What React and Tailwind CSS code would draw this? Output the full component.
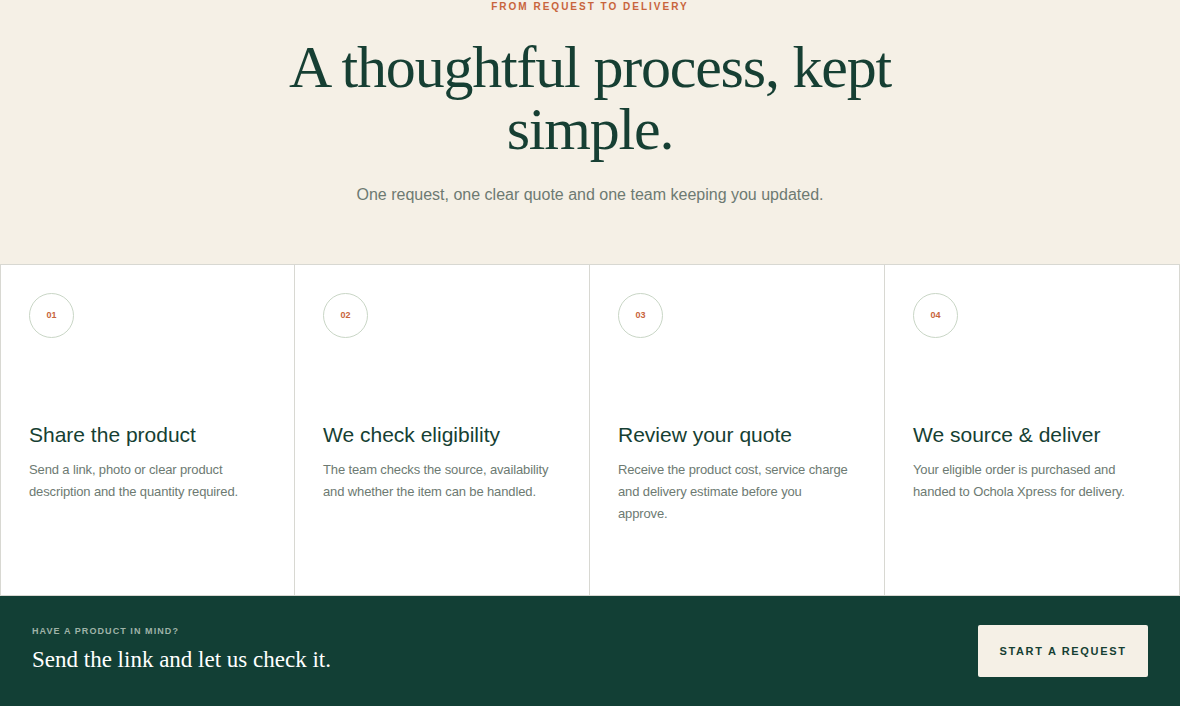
const steps = [
  {
    n: "01",
    title: "Share the product",
    body: "Send a link, photo or clear product description and the quantity required.",
  },
  {
    n: "02",
    title: "We check eligibility",
    body: "The team checks the source, availability and whether the item can be handled.",
  },
  {
    n: "03",
    title: "Review your quote",
    body: "Receive the product cost, service charge and delivery estimate before you approve.",
  },
  {
    n: "04",
    title: "We source & deliver",
    body: "Your eligible order is purchased and handed to Ochola Xpress for delivery.",
  },
];

const sans = "font-['Liberation_Sans',Arial,sans-serif]";
const serif = "font-['Liberation_Serif','Times_New_Roman',serif]";

export default function App() {
  return (
    <div className={`w-[1180px] h-[706px] overflow-hidden bg-[#f5f0e6] ${sans}`}>
      <section className="flex flex-col items-center pt-[2px] h-[264px]">
        <p className="text-[10px] font-bold tracking-[0.2em] text-[#c8643c] leading-[10px]">
          FROM REQUEST TO DELIVERY
        </p>
        <h1
          className={`${serif} mt-[24px] w-[640px] text-center text-[60px] leading-[62px] tracking-[-0.02em] text-[#163f33]`}
        >
          A thoughtful process, kept simple.
        </h1>
        <p className="mt-[23px] text-[16px] text-[#6d7a72]">
          One request, one clear quote and one team keeping you updated.
        </p>
      </section>

      <section className="grid grid-cols-4 bg-white h-[332px]">
        {steps.map((s) => (
          <div key={s.n} className="flex flex-col border border-[#d8d8d2] -ml-px first:ml-0 px-[28px] pt-[28px]">
            <div className="flex h-[45px] w-[45px] items-center justify-center rounded-full border border-[#c9d6c6] text-[9px] font-bold text-[#c8643c]">
              {s.n}
            </div>
            <h3 className="mt-[83px] text-[21px] leading-[28px] text-[#163f33]">{s.title}</h3>
            <p className="mt-[10px] max-w-[234px] text-[13px] leading-[22px] tracking-[-0.01em] text-[#6d7a72]">{s.body}</p>
          </div>
        ))}
      </section>

      <section className="flex items-center justify-between bg-[#123f35] h-[110px] px-[32px]">
        <div>
          <p className="text-[9px] font-bold tracking-[0.12em] text-[#9fb3a8]">HAVE A PRODUCT IN MIND?</p>
          <p className={`${serif} mt-[5px] text-[23px] text-white`}>Send the link and let us check it.</p>
        </div>
        <button className="h-[52px] w-[170px] rounded-[2px] bg-[#f5f0e6] text-[11px] font-bold tracking-[0.15em] text-[#163f33]">
          START A REQUEST
        </button>
      </section>
    </div>
  );
}
